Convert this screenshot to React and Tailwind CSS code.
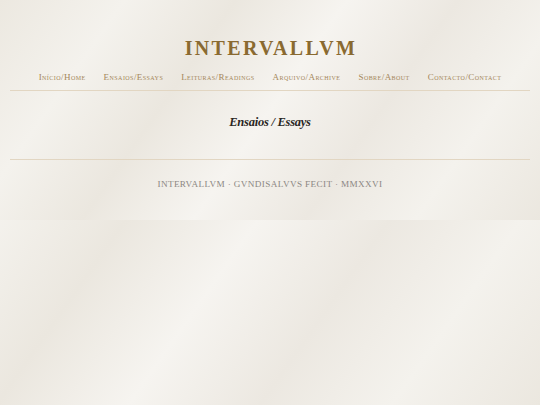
import React from "react";

const bg =
  "bg-[linear-gradient(125deg,#ece8e0_0%,#f4f2ed_18%,#ebe7df_34%,#f6f4f0_50%,#ece8e1_66%,#f4f2ed_82%,#ebe7df_100%)]";

const navItems = [
  "Início/Home",
  "Ensaios/Essays",
  "Leituras/Readings",
  "Arquivo/Archive",
  "Sobre/About",
  "Contacto/Contact",
];

export default function App() {
  return (
    <div
      className={`min-h-screen w-full ${bg}`}
      style={{ fontFamily: '"Liberation Serif", "DejaVu Serif", serif' }}
    >
      <div className={`w-full ${bg} h-[220px] px-[10px] pt-[36px]`}>
        <h1 className="text-center text-[20px] leading-[24px] font-bold tracking-[0.115em] text-[#8a6a30] pl-[2px]">
          INTERVALLVM
        </h1>
        <nav className="mt-[10px] flex justify-center gap-[18px] text-[9px] leading-[14px] tracking-[0.05em] text-[#a4875a] [font-variant:small-caps]">
          {navItems.map((n) => (
            <span key={n}>{n}</span>
          ))}
        </nav>
        <div className="mt-[6px] h-px bg-[#e2d6c2]" />
        <div className="h-[68px] flex items-center justify-center pb-[7px]">
          <h2 className="text-[12.5px] leading-[16px] italic font-bold text-[#2a2623] tracking-[-0.02em]">
            Ensaios / Essays
          </h2>
        </div>
        <div className="h-px bg-[#e2d6c2]" />
        <p className="mt-[17px] text-center text-[9.2px] leading-[14px] tracking-[0.04em] text-[#8c8783]">
          INTERVALLVM · GVNDISALVVS FECIT · MMXXVI
        </p>
      </div>
    </div>
  );
}
